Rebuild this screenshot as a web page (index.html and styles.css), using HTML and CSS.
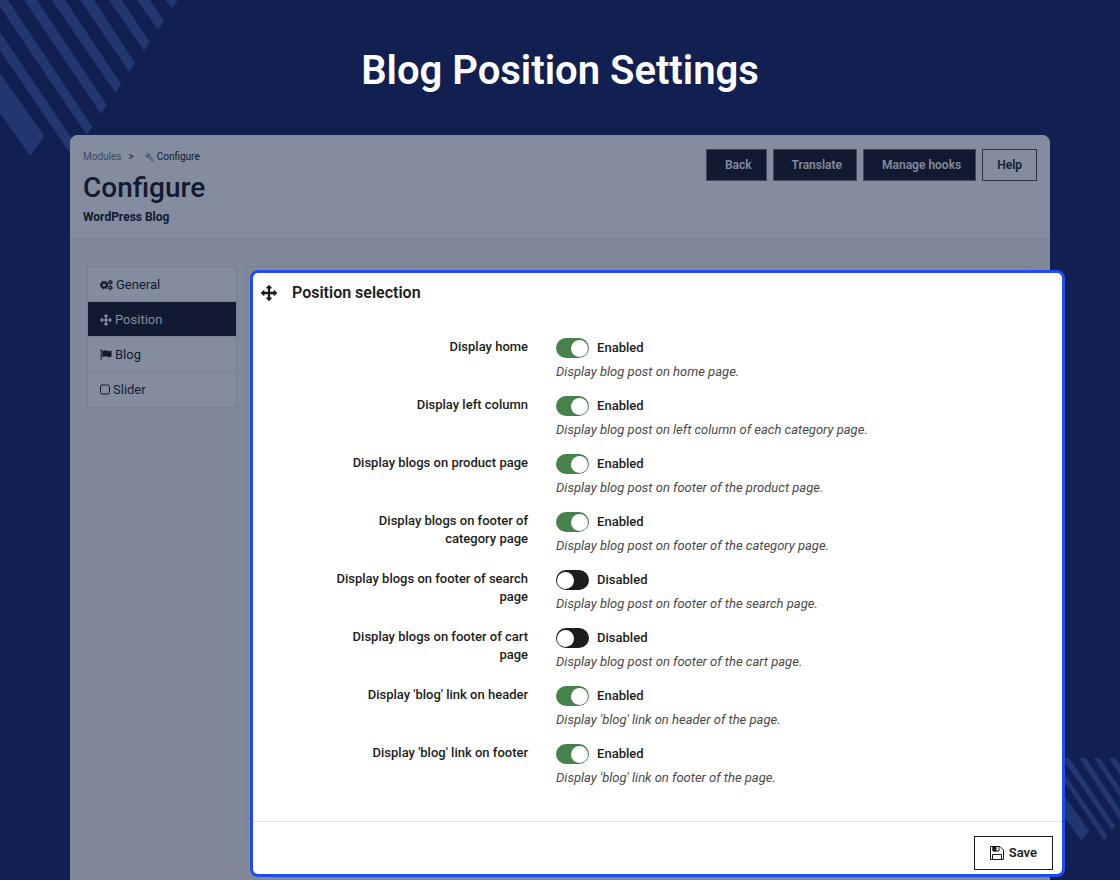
FILE: index.html
```html
<!DOCTYPE html>
<html lang="en">
  <head>
    <meta charset="utf-8" />
    <meta name="viewport" content="width=device-width, initial-scale=1" />
    <title>Blog Position Settings</title>
    <link rel="stylesheet" href="styles.css" />
  </head>

  <body>
    <svg class="stripes stripes_top" width="180" height="160" viewBox="0 0 180 160" aria-hidden="true">
      <path d="M0 73L44 136 30 156 0 113zM0 32L78 148 72 156 0 50zM-5 0H8L92.500 127 87 135 0 7zM24 0H37L107 105 101 114zM52 0H65L121 84 115.500 93zM80 0H94L135 63 129.500 72zM109 0H122L149.500 42 144 51zM137 0H150L164 21 158 30zM165 0H178L172 8z" />
    </svg>
    <svg class="stripes stripes_bottom" width="60" height="84" viewBox="1060 758 60 84" aria-hidden="true">
      <path d="M1060 790L1089 831 1081.500 841 1060 811zM1060 767L1107.500 836 1104.500 841 1060 775zM1062 758H1069L1115 826 1112 830zM1079 758H1086L1120 810V820zM1094 758H1100L1120 788V797zM1109 758H1115L1120 765V775z" />
    </svg>

    <h1 class="title">Blog Position Settings</h1>

    <div class="window">
      <header class="header">
        <div>
          <nav class="breadcrumb" aria-label="Breadcrumb">
            <a class="breadcrumb__link" href="#">Modules</a>
            <span>&gt;</span>
            <a class="breadcrumb__current" href="#">
              <svg width="9" height="9" viewBox="0 0 18 18" fill="none" stroke="#3f4960" stroke-width="2" aria-hidden="true">
                <path d="M5 1L8 4 5 7 2 4A5 5 0 0 0 8 9L14 16A1.500 1.500 0 0 0 16.500 13.500L10 7A5 5 0 0 0 5 1z" />
              </svg>
              Configure
            </a>
          </nav>
          <h2 class="header__title">Configure</h2>
          <p class="header__name">WordPress Blog</p>
        </div>
        <div class="toolbar">
          <button class="button button_dark" type="button">Back</button>
          <button class="button button_dark" type="button">Translate</button>
          <button class="button button_dark" type="button">Manage hooks</button>
          <button class="button button_help" type="button">Help</button>
        </div>
      </header>

      <div class="content">
        <nav class="menu" aria-label="Settings">
          <a class="menu__item" href="#">
            <svg width="13" height="12" viewBox="0 0 28 24" fill="none" stroke="currentColor" aria-hidden="true">
              <circle cx="9" cy="12" r="5.500" stroke-width="4.500" />
              <circle cx="9" cy="12" r="8" stroke-width="2.500" stroke-dasharray="3.140" />
              <circle cx="22" cy="6" r="3" stroke-width="2.500" />
              <circle cx="22" cy="6" r="4.800" stroke-width="1.500" stroke-dasharray="2.500" />
              <circle cx="22" cy="18" r="3" stroke-width="2.500" />
              <circle cx="22" cy="18" r="4.800" stroke-width="1.500" stroke-dasharray="2.500" />
            </svg>
            General
          </a>
          <a class="menu__item menu__item_active" href="#">
            <svg width="12" height="12" viewBox="0 0 1792 1792" fill="currentColor" aria-hidden="true">
              <path d="M1792 896q0 26-19 45l-256 256q-19 19-45 19t-45-19-19-45v-128h-384v384h128q26 0 45 19t19 45-19 45l-256 256q-19 19-45 19t-45-19l-256-256q-19-19-19-45t19-45 45-19h128v-384h-384v128q0 26-19 45t-45 19-45-19l-256-256q-19-19-19-45t19-45l256-256q19-19 45-19t45 19 19 45v128h384v-384h-128q-26 0-45-19t-19-45 19-45l256-256q19-19 45-19t45 19l256 256q19 19 19 45t-19 45-45 19h-128v384h384v-128q0-26 19-45t45-19 45 19l256 256q19 19 19 45z" />
            </svg>
            Position
          </a>
          <a class="menu__item" href="#">
            <svg width="12" height="12" viewBox="0 0 26 24" fill="currentColor" aria-hidden="true">
              <path d="M1 3A2 2 0 1 1 3.500 4V23H1.500V4zM5 4Q11 0 16 3 20 5 25 2V15Q20 18 15.500 15.500 11 13 5 17z" />
            </svg>
            Blog
          </a>
          <a class="menu__item" href="#">
            <svg width="10" height="12" viewBox="0 0 20 24" fill="none" stroke="currentColor" stroke-width="2" aria-hidden="true">
              <rect x="1" y="2" width="18" height="18" rx="3" />
            </svg>
            Slider
          </a>
        </nav>

        <main class="main">
          <form class="panel">
            <h3 class="panel__title">
              <svg width="16" height="16" viewBox="0 0 1792 1792" fill="currentColor" aria-hidden="true">
                <path d="M1792 896q0 26-19 45l-256 256q-19 19-45 19t-45-19-19-45v-128h-384v384h128q26 0 45 19t19 45-19 45l-256 256q-19 19-45 19t-45-19l-256-256q-19-19-19-45t19-45 45-19h128v-384h-384v128q0 26-19 45t-45 19-45-19l-256-256q-19-19-19-45t19-45l256-256q19-19 45-19t45 19 19 45v128h384v-384h-128q-26 0-45-19t-19-45 19-45l256-256q19-19 45-19t45 19l256 256q19 19 19 45t-19 45-45 19h-128v384h384v-128q0-26 19-45t45-19 45 19l256 256q19 19 19 45z" />
              </svg>
              Position selection
            </h3>

            <div class="fields">
              <div class="field">
                <label class="field__label" for="home">Display home</label>
                <div>
                  <label class="switch"><input class="switch__input" type="checkbox" id="home" checked />Enabled</label>
                  <p class="field__hint">Display blog post on home page.</p>
                </div>
              </div>
              <div class="field">
                <label class="field__label" for="left-column">Display left column</label>
                <div>
                  <label class="switch"><input class="switch__input" type="checkbox" id="left-column" checked />Enabled</label>
                  <p class="field__hint">Display blog post on left column of each category page.</p>
                </div>
              </div>
              <div class="field">
                <label class="field__label" for="product">Display blogs on product page</label>
                <div>
                  <label class="switch"><input class="switch__input" type="checkbox" id="product" checked />Enabled</label>
                  <p class="field__hint">Display blog post on footer of the product page.</p>
                </div>
              </div>
              <div class="field">
                <label class="field__label" for="category">Display blogs on footer of category page</label>
                <div>
                  <label class="switch"><input class="switch__input" type="checkbox" id="category" checked />Enabled</label>
                  <p class="field__hint">Display blog post on footer of the category page.</p>
                </div>
              </div>
              <div class="field">
                <label class="field__label" for="search">Display blogs on footer of search page</label>
                <div>
                  <label class="switch"><input class="switch__input" type="checkbox" id="search" />Disabled</label>
                  <p class="field__hint">Display blog post on footer of the search page.</p>
                </div>
              </div>
              <div class="field">
                <label class="field__label" for="cart">Display blogs on footer of cart page</label>
                <div>
                  <label class="switch"><input class="switch__input" type="checkbox" id="cart" />Disabled</label>
                  <p class="field__hint">Display blog post on footer of the cart page.</p>
                </div>
              </div>
              <div class="field">
                <label class="field__label" for="link-header">Display 'blog' link on header</label>
                <div>
                  <label class="switch"><input class="switch__input" type="checkbox" id="link-header" checked />Enabled</label>
                  <p class="field__hint">Display 'blog' link on header of the page.</p>
                </div>
              </div>
              <div class="field">
                <label class="field__label" for="link-footer">Display 'blog' link on footer</label>
                <div>
                  <label class="switch"><input class="switch__input" type="checkbox" id="link-footer" checked />Enabled</label>
                  <p class="field__hint">Display 'blog' link on footer of the page.</p>
                </div>
              </div>
            </div>

            <div class="panel__footer">
              <button class="button button_save" type="button">
                <svg width="14" height="14" viewBox="0 0 28 28" fill="none" stroke="currentColor" stroke-width="2" aria-hidden="true">
                  <path d="M1 1H20L27 8V27H1zM5 27V17H23V27M6 1V10H18V1" />
                  <path d="M6 1H12V10H6z" fill="currentColor" />
                </svg>
                Save
              </button>
            </div>
          </form>
        </main>
      </div>
    </div>
  </body>
</html>
```

FILE: styles.css
```css
* {
  box-sizing: border-box;
}

body {
  position: relative;
  display: flex;
  flex-direction: column;
  min-height: 100vh;
  margin: 0;
  overflow-x: hidden;
  font-family: Roboto, "Noto Sans", sans-serif;
  font-size: 13px;
  line-height: 18px;
  color: #1d1d1b;
  background: #112050;
}

h1,
h2,
h3,
p {
  margin: 0;
}

a {
  color: inherit;
  text-decoration: none;
}

svg {
  flex: none;
}

.stripes {
  position: absolute;
  z-index: -1;
  fill: #22376f;
}

.stripes_top {
  top: 0;
  left: 0;
}

.stripes_bottom {
  right: 0;
  bottom: 38px;
}

.title {
  padding: 47px 20px 40px;
  font-size: 40px;
  font-weight: 600;
  line-height: 48px;
  text-align: center;
  color: #fff;
}

.window {
  flex: 1;
  margin: 0 70px;
  color: #111a30;
  background: #80889a;
  border-radius: 8px 8px 0 0;
}

.header {
  display: flex;
  justify-content: space-between;
  padding: 14px 13px;
  background: #848c9f;
  border-bottom: 1px solid #777f92;
  border-radius: 8px 8px 0 0;
}

.breadcrumb {
  display: flex;
  gap: 7px;
  font-size: 10px;
  line-height: 16px;
}

.breadcrumb__link {
  color: #3f4960;
}

.breadcrumb__current {
  display: flex;
  align-items: center;
  gap: 3px;
  margin-left: 4px;
}

.header__title {
  padding: 3px 0;
  font-size: 28px;
  font-weight: 500;
  line-height: 40px;
}

.header__name {
  font-size: 12px;
  font-weight: 700;
  line-height: 13px;
}

.toolbar {
  display: flex;
  align-items: flex-start;
  gap: 6px;
}

.button {
  height: 32px;
  font: inherit;
  font-size: 12px;
  font-weight: 600;
  border: 1px solid #1d1d1b;
  border-radius: 0;
  cursor: pointer;
}

.button_dark {
  padding: 0 14px 0 18px;
  color: #848c9f;
  background: #111a30;
  border-color: #3f4960;
}

.button_help {
  padding: 0 14px;
  color: #111a30;
  background: none;
  border-color: #2b354c;
}

.button_save {
  display: flex;
  align-items: center;
  gap: 5px;
  height: 34px;
  padding: 0 15px;
  font-size: 13px;
  color: #1d1d1b;
  background: #fff;
}

.content {
  display: flex;
  align-items: flex-start;
  gap: 9px;
  padding: 27px 18px 0 17px;
}

.menu {
  flex: 0 0 150px;
  background: #848c9f;
  border: 1px solid #777f92;
}

.menu__item {
  display: flex;
  align-items: center;
  gap: 3px;
  height: 35px;
  padding: 1px 12px 0;
  border-bottom: 1px solid #777f92;
}

.menu__item:last-child {
  border-bottom: 0;
}

.menu__item_active {
  color: #848c9f;
  background: #111a30;
}

.main {
  flex: 1;
  min-width: 0;
  border: 1px solid #777f92;
}

/* the active panel sticks out of the dimmed window */
.panel {
  margin: 3px -34px -35px 3px;
  color: #1d1d1b;
  background: #fff;
  border: 3px solid #1f4bf5;
  border-radius: 8px;
}

.panel__title {
  display: flex;
  align-items: center;
  gap: 15px;
  padding: 8px;
  font-size: 16px;
  font-weight: 600;
  line-height: 24px;
}

.fields {
  display: grid;
  gap: 17px;
  padding: 25px 0 36px;
}

.field {
  display: grid;
  grid-template-columns: 34% 1fr;
  column-gap: 28px;
}

.field__label {
  justify-self: end;
  max-width: 196px;
  font-weight: 500;
  text-align: right;
}

.field__hint {
  padding-top: 7px;
  line-height: 14px;
  font-style: italic;
  color: #4a4a48;
}

.switch {
  display: flex;
  align-items: center;
  gap: 8px;
  height: 20px;
  font-weight: 500;
}

.switch__input {
  display: flex;
  align-items: center;
  width: 33px;
  height: 20px;
  margin: 0;
  padding: 1px;
  appearance: none;
  background: #1d1d1b;
  border-radius: 10px;
  cursor: pointer;
}

.switch__input::before {
  content: "";
  width: 17px;
  height: 17px;
  background: #fff;
  border-radius: 50%;
}

.switch__input:checked {
  justify-content: flex-end;
  background: #46824c;
}

.panel__footer {
  display: flex;
  justify-content: flex-end;
  padding: 14px 9px 4px;
  border-top: 1px solid #e2e2e2;
}
```
